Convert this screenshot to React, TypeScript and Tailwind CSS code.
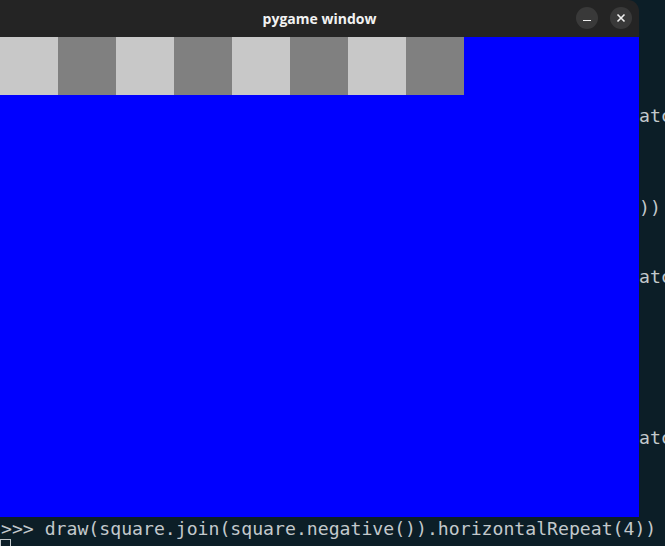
const squares = [0, 1, 2, 3, 4, 5, 6, 7];

// lines of the terminal that peek out to the right of the window (index from top)
const stripLines: Record<number, string> = {
  4: "atc",
  8: "))",
  11: "atc",
  18: "atc",
};

const App = () => {
  return (
    <div className="w-[665px] h-[546px] overflow-hidden bg-[#0c1e27] text-[#c3c9cc] font-['DejaVu_Sans_Mono',monospace] text-[18.15px] leading-[23px]">
      <div className="flex h-[518px]">
        {/* pygame window */}
        <div className="w-[639px] h-[517px] flex flex-col rounded-tr-[11px] overflow-hidden shrink-0">
          <div className="relative h-[37px] bg-[#242424] flex items-center justify-center">
            <span className="font-['Open_Sans','Noto_Sans',sans-serif] font-bold text-[14px] text-[#f2f2f2] leading-none">
              pygame window
            </span>
            <div className="absolute right-[7px] top-[7px] flex gap-[12px]">
              <div className="w-[22px] h-[22px] rounded-full bg-[#393939] flex items-center justify-center">
                <div className="w-[8px] h-[1.5px] bg-[#eeeeee] mt-[5px]" />
              </div>
              <div className="w-[22px] h-[22px] rounded-full bg-[#393939] flex items-center justify-center">
                <svg width="10" height="10" viewBox="0 0 10 10">
                  <path d="M1.5 1.5 L8.5 8.5 M8.5 1.5 L1.5 8.5" stroke="#f0f0f0" strokeWidth="1.6" />
                </svg>
              </div>
            </div>
          </div>
          <div className="flex-1 bg-[#0000ff]">
            <div className="flex">
              {squares.map((i) => (
                <div
                  key={i}
                  className={i % 2 === 0 ? "w-[58px] h-[58px] bg-[#c8c8c8]" : "w-[58px] h-[58px] bg-[#808080]"}
                />
              ))}
            </div>
          </div>
        </div>
        {/* terminal behind, visible to the right */}
        <div className="flex-1 overflow-hidden pt-[12px] whitespace-pre">
          {Array.from({ length: 22 }).map((_, n) => (
            <div key={n} className="h-[23px]">
              {stripLines[n] ?? ""}
            </div>
          ))}
        </div>
      </div>
      <div className="whitespace-pre pl-[1px] -mt-[1px]">
        {">>> draw(square.join(square.negative()).horizontalRepeat(4))"}
      </div>
      <div className="w-[11px] h-[10px] border border-[#c3c9cc] -mt-[1px]" />
    </div>
  );
};

export default App;
